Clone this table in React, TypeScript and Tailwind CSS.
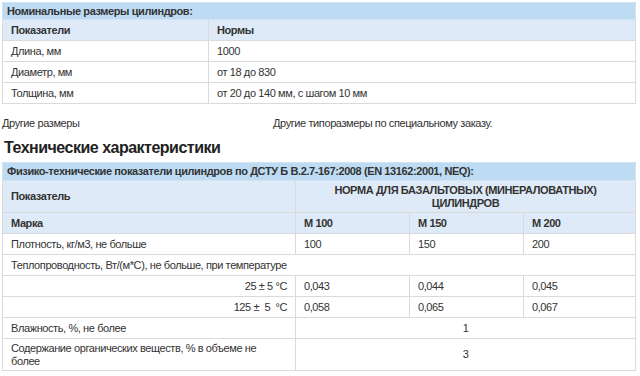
import React from "react";

const td = "border border-[#dadada] px-2 h-[21px] align-middle";

export default function App() {
  return (
    <div className="w-[640px] h-[376px] overflow-hidden bg-white text-[#333] text-[11px] leading-[13px] tracking-[-0.4px] pt-[2px] pl-[2px]" style={{ fontFamily: '"Liberation Sans", Arial, sans-serif' }}>
      <table className="w-[634px] border-collapse table-fixed">
        <colgroup>
          <col className="w-[206px]" />
          <col />
        </colgroup>
        <tbody>
          <tr className="bg-[#bddcf4]">
            <td colSpan={2} className="border border-[#d0e4f4] px-[4px] h-[17px] font-bold">Номинальные размеры цилиндров:</td>
          </tr>
          <tr className="bg-[#deeaf7] font-bold">
            <td className={td}>Показатели</td>
            <td className={td}>Нормы</td>
          </tr>
          <tr>
            <td className={td}>Длина, мм</td>
            <td className={td}>1000</td>
          </tr>
          <tr>
            <td className={td}>Диаметр, мм</td>
            <td className={td}>от 18 до 830</td>
          </tr>
          <tr>
            <td className={td}>Толщина, мм</td>
            <td className={td}>от 20 до 140 мм, с шагом 10 мм</td>
          </tr>
        </tbody>
      </table>
      <div className="flex mt-[13px]">
        <div className="w-[271px]">Другие размеры</div>
        <div>Другие типоразмеры по специальному заказу.</div>
      </div>
      <div className="mt-[8px] pl-[2px] text-[16px] leading-[20px] tracking-[-0.5px] font-bold text-[#222]">Технические характеристики</div>
      <table className="w-[634px] border-collapse table-fixed mt-[4px]">
        <colgroup>
          <col className="w-[293px]" />
          <col className="w-[114px]" />
          <col className="w-[114px]" />
          <col />
        </colgroup>
        <tbody>
          <tr className="bg-[#bddcf4]">
            <td colSpan={4} className="border border-[#d0e4f4] px-[4px] h-[18px] font-bold">Физико-технические показатели цилиндров по ДСТУ Б В.2.7-167:2008 (EN 13162:2001, NEQ):</td>
          </tr>
          <tr className="bg-[#deeaf7] font-bold">
            <td className={td + " h-[32px]"}>Показатель</td>
            <td colSpan={3} className={td + " h-[32px] text-center"}>НОРМА ДЛЯ БАЗАЛЬТОВЫХ (МИНЕРАЛОВАТНЫХ)<br />ЦИЛИНДРОВ</td>
          </tr>
          <tr className="bg-[#deeaf7] font-bold">
            <td className={td}>Марка</td>
            <td className={td}>М 100</td>
            <td className={td}>М 150</td>
            <td className={td}>М 200</td>
          </tr>
          <tr>
            <td className={td}>Плотность, кг/м3, не больше</td>
            <td className={td}>100</td>
            <td className={td}>150</td>
            <td className={td}>200</td>
          </tr>
          <tr>
            <td colSpan={4} className={td}>Теплопроводность, Вт/(м*С), не больше, при температуре</td>
          </tr>
          <tr>
            <td className={td + " text-right"}>25 ± 5 °C</td>
            <td className={td}>0,043</td>
            <td className={td}>0,044</td>
            <td className={td}>0,045</td>
          </tr>
          <tr>
            <td className={td + " text-right"}>125 ±&nbsp; 5 &nbsp;°C</td>
            <td className={td}>0,058</td>
            <td className={td}>0,065</td>
            <td className={td}>0,067</td>
          </tr>
          <tr>
            <td className={td}>Влажность, %, не более</td>
            <td colSpan={3} className={td + " text-center"}>1</td>
          </tr>
          <tr>
            <td className={td + " h-[32px]"}>Содержание органических веществ, % в объеме не более</td>
            <td colSpan={3} className={td + " h-[32px] text-center"}>3</td>
          </tr>
        </tbody>
      </table>
    </div>
  );
}
